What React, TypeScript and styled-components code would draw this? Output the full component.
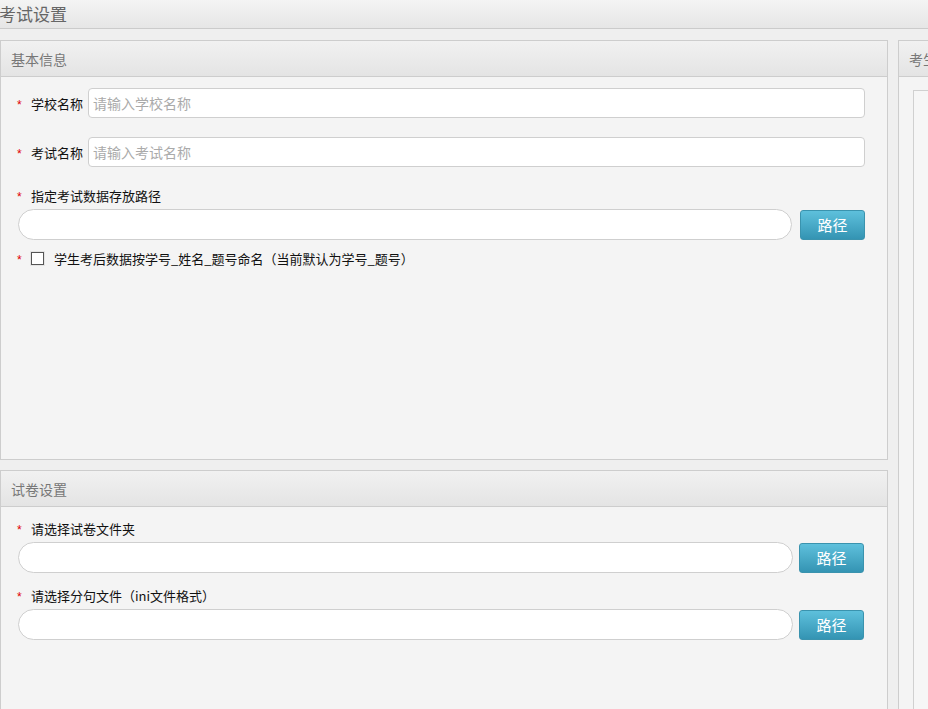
import styled, { createGlobalStyle } from 'styled-components';

const GlobalStyle = createGlobalStyle`
  html, body {
    margin: 0;
    padding: 0;
    background-color: #efefef;
    font-family: "Noto Sans CJK SC", "Liberation Sans", sans-serif;
    overflow: hidden;
  }
`;

const StyledPage = styled.div`
  width: 928px;
  height: 709px;
  overflow: hidden;
`;

const StyledTopBar = styled.div`
  height: 28px;
  display: flex;
  align-items: center;

  background: linear-gradient(#f4f4f4, #e6e6e6);
  border-bottom: 1px solid #cbcbcb;
`;

const StyledTopTitle = styled.div`
  margin-left: -1px;
  font-size: 17px;
  line-height: 28px;

  color: #666;
`;

const StyledContent = styled.div`
  display: grid;
  grid-template-columns: 888px 200px;
  gap: 10px;
  padding-top: 11px;
`;

const StyledColumn = styled.div`
  display: flex;
  flex-direction: column;
  gap: 10px;
`;

const StyledPanel = styled.div<{ $height?: number }>`
  display: flex;
  flex-direction: column;
  height: ${({ $height }) => ($height ? `${$height}px` : 'auto')};

  background-color: #f4f4f4;
  border: 1px solid #cdcdcd;
  box-sizing: border-box;
`;

const StyledPanelHeader = styled.div`
  height: 35px;
  display: flex;
  align-items: center;
  padding-left: 10px;
  flex-shrink: 0;

  font-size: 14px;
  color: #777;
  white-space: nowrap;

  background: linear-gradient(#f1f1f1, #e4e4e4);
  border-bottom: 1px solid #cdcdcd;
`;

const StyledPanelBody = styled.div<{ $paddingTop: number }>`
  padding: ${({ $paddingTop }) => $paddingTop}px 22px 0 16px;
`;

const StyledRightBody = styled.div`
  flex: 1;
  padding: 13px 0 0 14px;
`;

const StyledInnerBox = styled.div`
  height: 700px;

  background-color: #f6f6f6;
  border: 1px solid #d0d0d0;
  border-right: none;
`;

const StyledInlineRow = styled.div<{ $marginBottom: number }>`
  display: flex;
  align-items: center;
  margin-bottom: ${({ $marginBottom }) => $marginBottom}px;
`;

const StyledStar = styled.span`
  width: 14px;
  flex-shrink: 0;
  padding-top: 3px;

  font-family: "Liberation Sans", sans-serif;
  font-size: 12px;
  color: #e00000;
`;

const StyledLabel = styled.span`
  font-size: 13px;
  color: #111;
  white-space: nowrap;
`;

const StyledInlineLabel = styled(StyledLabel)`
  margin-right: 5px;
`;

const StyledTextInput = styled.input`
  flex: 1;
  height: 30px;
  padding: 0 4px;
  box-sizing: border-box;

  font-family: "Noto Sans CJK SC", sans-serif;
  font-size: 14px;

  background-color: #fff;
  border: 1px solid #cfcfcf;
  border-radius: 4px;
  outline: none;

  &::placeholder {
    color: #aaa;
  }
`;

const StyledLabelLine = styled.div<{ $marginBottom: number }>`
  display: flex;
  align-items: center;
  height: 16px;
  margin-bottom: ${({ $marginBottom }) => $marginBottom}px;
`;

const StyledPathRow = styled.div<{ $marginBottom: number; $gap: number }>`
  display: flex;
  align-items: center;
  gap: ${({ $gap }) => $gap}px;
  margin-bottom: ${({ $marginBottom }) => $marginBottom}px;
`;

const StyledPathInput = styled.input`
  width: 775px;
  height: 31px;
  box-sizing: border-box;
  margin-left: 1px;

  background-color: #fff;
  border: 1px solid #cfcfcf;
  border-radius: 16px;
  outline: none;
`;

const StyledPathButton = styled.button`
  width: 65px;
  height: 30px;
  padding: 0;

  font-family: "Noto Sans CJK SC", sans-serif;
  font-size: 15px;
  color: #fff;

  background: linear-gradient(#5ec0dc, #3494b3);
  border: 1px solid #3a93ae;
  border-radius: 3px;
  cursor: pointer;
`;

const StyledCheckbox = styled.span`
  width: 11px;
  height: 11px;
  margin: 0 10px 0 0;
  flex-shrink: 0;

  background-color: #fff;
  border: 1px solid #555;
  box-shadow: 0 0 0 1px #e4e4e4;
`;

const App = (): JSX.Element => {
  return (
    <StyledPage>
      <GlobalStyle />
      <StyledTopBar>
        <StyledTopTitle>考试设置</StyledTopTitle>
      </StyledTopBar>
      <StyledContent>
        <StyledColumn>
          <StyledPanel $height={420}>
            <StyledPanelHeader>基本信息</StyledPanelHeader>
            <StyledPanelBody $paddingTop={11}>
              <StyledInlineRow $marginBottom={19}>
                <StyledStar>*</StyledStar>
                <StyledInlineLabel>学校名称</StyledInlineLabel>
                <StyledTextInput placeholder="请输入学校名称" />
              </StyledInlineRow>
              <StyledInlineRow $marginBottom={20}>
                <StyledStar>*</StyledStar>
                <StyledInlineLabel>考试名称</StyledInlineLabel>
                <StyledTextInput placeholder="请输入考试名称" />
              </StyledInlineRow>
              <StyledLabelLine $marginBottom={6}>
                <StyledStar>*</StyledStar>
                <StyledLabel>指定考试数据存放路径</StyledLabel>
              </StyledLabelLine>
              <StyledPathRow $marginBottom={10} $gap={8}>
                <StyledPathInput />
                <StyledPathButton>路径</StyledPathButton>
              </StyledPathRow>
              <StyledLabelLine $marginBottom={0}>
                <StyledStar>*</StyledStar>
                <StyledCheckbox />
                <StyledLabel>学生考后数据按学号_姓名_题号命名（当前默认为学号_题号）</StyledLabel>
              </StyledLabelLine>
            </StyledPanelBody>
          </StyledPanel>
          <StyledPanel $height={260}>
            <StyledPanelHeader>试卷设置</StyledPanelHeader>
            <StyledPanelBody $paddingTop={13}>
              <StyledLabelLine $marginBottom={6}>
                <StyledStar>*</StyledStar>
                <StyledLabel>请选择试卷文件夹</StyledLabel>
              </StyledLabelLine>
              <StyledPathRow $marginBottom={14} $gap={6}>
                <StyledPathInput />
                <StyledPathButton>路径</StyledPathButton>
              </StyledPathRow>
              <StyledLabelLine $marginBottom={6}>
                <StyledStar>*</StyledStar>
                <StyledLabel>请选择分句文件（ini文件格式）</StyledLabel>
              </StyledLabelLine>
              <StyledPathRow $marginBottom={0} $gap={6}>
                <StyledPathInput />
                <StyledPathButton>路径</StyledPathButton>
              </StyledPathRow>
            </StyledPanelBody>
          </StyledPanel>
        </StyledColumn>
        <StyledPanel $height={700}>
          <StyledPanelHeader>考生信息</StyledPanelHeader>
          <StyledRightBody>
            <StyledInnerBox />
          </StyledRightBody>
        </StyledPanel>
      </StyledContent>
    </StyledPage>
  );
};

export default App;
